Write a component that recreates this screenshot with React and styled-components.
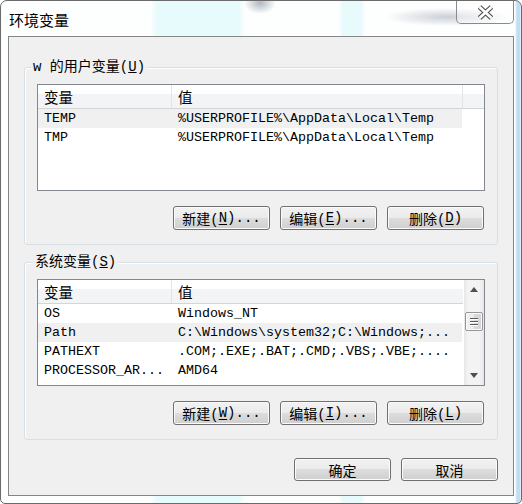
import React from "react";
import styled, { createGlobalStyle } from "styled-components";

const Global = createGlobalStyle`
  html, body {
    margin: 0;
    padding: 0;
    background: #ffffff;
  }
  body {
    font-family: "Noto Sans CJK SC", "Liberation Sans", sans-serif;
  }
`;

const MONO = `"Liberation Mono", "Noto Sans CJK SC", monospace`;

const Window = styled.div`
  width: 522px;
  height: 504px;
  box-sizing: border-box;
  border: 1px solid #6a6a6a;
  border-radius: 7px 7px 5px 5px;
  padding: 0 7px 7px;
  display: flex;
  flex-direction: column;
  overflow: hidden;
  background:
    radial-gradient(ellipse 16px 11px at 259px 2px, rgba(80, 100, 120, 0.45), transparent),
    radial-gradient(ellipse 62px 9px at 446px 16px, rgba(110, 120, 145, 0.35), transparent),
    linear-gradient(90deg, transparent 514px, rgba(150, 200, 240, 0.6) 516px, rgba(150, 200, 240, 0.6) 519px, transparent 520px),
    linear-gradient(90deg, transparent 150px, rgba(205, 246, 250, 0.45) 156px, rgba(205, 246, 250, 0.45) 238px, transparent 244px,
      transparent 338px, rgba(205, 246, 250, 0.45) 342px, rgba(205, 246, 250, 0.45) 360px, transparent 364px),
    #fdfefe;
`;

const TitleBar = styled.div`
  height: 35px;
  flex: 0 0 35px;
  display: flex;
  justify-content: space-between;
  align-items: flex-start;
`;

const Title = styled.div`
  padding: 10px 0 0 1px;
  font-size: 15px;
  line-height: 18px;
  color: #000;
`;

const CloseButton = styled.div`
  width: 58px;
  height: 24px;
  margin-top: -1px;
  box-sizing: border-box;
  border: 1px solid #8a8a8a;
  border-top: none;
  border-radius: 0 0 5px 5px;
  background: rgba(255, 255, 255, 0.35);
  display: flex;
  justify-content: center;
  align-items: center;
  padding-top: 2px;
`;

const Client = styled.div`
  flex: 1 1 auto;
  box-sizing: border-box;
  border: 1px solid #858585;
  background: #f0f0f0;
  padding: 30px 15px 0;
  display: flex;
  flex-direction: column;
`;

const Group = styled.div`
  position: relative;
  border: 1px solid #d5dfe5;
  border-radius: 3px;
  padding: 16px 12px 14px;
  margin-top: ${(p) => p.$gap || 0}px;
  display: flex;
  flex-direction: column;
  box-shadow: inset 1px 1px 0 #ffffff;
`;

const GroupLabel = styled.div`
  position: absolute;
  top: -9px;
  left: ${(p) => p.$left}px;
  padding: 0 2px;
  background: #f0f0f0;
  font-family: ${MONO};
  font-size: 14px;
  line-height: 17px;
  color: #000;
`;

const ListView = styled.div`
  height: 107px;
  box-sizing: border-box;
  border: 1px solid #828790;
  background: #fff;
  display: flex;
  overflow: hidden;
`;

const ListBody = styled.div`
  flex: 1 1 auto;
  display: flex;
  flex-direction: column;
`;

const HeaderRow = styled.div`
  display: flex;
  height: 23px;
  border-bottom: 1px solid #d5d5d5;
  background: linear-gradient(#ffffff 0%, #ffffff 40%, #f3f4f6 41%, #f3f4f6 100%);
`;

const HeaderCell = styled.div`
  width: ${(p) => p.$w}px;
  flex: ${(p) => (p.$w ? "0 0 auto" : "1 1 auto")};
  box-sizing: border-box;
  border-right: ${(p) => (p.$last ? "none" : "1px solid #e3e4e6")};
  padding-left: 6px;
  font-size: 14.5px;
  line-height: 23px;
  color: #000;
`;

const Row = styled.div`
  display: flex;
  height: 19px;
  width: 424px;
  background: ${(p) => (p.$hl ? "#f0f0f0" : "transparent")};
`;

const Cell = styled.div`
  width: ${(p) => p.$w}px;
  box-sizing: border-box;
  padding-left: 6px;
  font-family: ${MONO};
  font-size: 13.33px;
  line-height: 19px;
  color: #000;
  white-space: nowrap;
  overflow: hidden;
`;

const ScrollBar = styled.div`
  flex: 0 0 20px;
  margin-left: 1px;
  display: flex;
  flex-direction: column;
  align-items: center;
  background: linear-gradient(90deg, #e6e6e6, #f3f3f3 20%, #f3f3f3 80%, #e6e6e6);
`;

const Arrow = styled.div`
  height: 19px;
  display: flex;
  justify-content: center;
  align-items: center;
`;

const Thumb = styled.div`
  width: 18px;
  height: 19px;
  margin-top: ${(p) => p.$top}px;
  box-sizing: border-box;
  border: 1px solid #979797;
  border-radius: 2px;
  background: linear-gradient(90deg, #f3f3f3, #e8e8e8 50%, #dadada 51%, #d4d4d4);
  box-shadow: inset 0 0 0 1px #fafafa;
  display: flex;
  flex-direction: column;
  justify-content: center;
  align-items: center;
  gap: 2px;
  span {
    display: block;
    width: 8px;
    height: 1px;
    background: #5a5a5a;
    box-shadow: 0 1px 0 #ffffff;
  }
`;

const Spacer = styled.div`
  flex: 1 1 auto;
`;

const ButtonRow = styled.div`
  display: flex;
  justify-content: flex-end;
  gap: 10px;
  margin-top: ${(p) => p.$top}px;
  padding-right: ${(p) => p.$right || 0}px;
`;

const Button = styled.div`
  width: 97px;
  height: ${(p) => p.$h || 24}px;
  box-sizing: border-box;
  border: 1px solid #707070;
  border-radius: 3px;
  background: linear-gradient(#f2f2f2 0%, #ebebeb 48%, #dddddd 50%, #cfcfcf 100%);
  box-shadow: inset 0 0 0 1px #fbfbfb;
  display: flex;
  justify-content: center;
  align-items: center;
  font-family: ${MONO};
  font-size: 14px;
  color: #000;
  white-space: nowrap;
  u {
    text-decoration: underline;
    text-underline-offset: 2px;
  }
`;

const userVars = [
  ["TEMP", "%USERPROFILE%\\AppData\\Local\\Temp"],
  ["TMP", "%USERPROFILE%\\AppData\\Local\\Temp"],
];

const sysVars = [
  ["OS", "Windows_NT"],
  ["Path", "C:\\Windows\\system32;C:\\Windows;..."],
  ["PATHEXT", ".COM;.EXE;.BAT;.CMD;.VBS;.VBE;...."],
  ["PROCESSOR_AR...", "AMD64"],
];

function Rows({ data, hl }) {
  return data.map(([name, value], i) => (
    <Row key={name} $hl={i === hl}>
      <Cell $w={134}>{name}</Cell>
      <Cell $w={290}>{value}</Cell>
    </Row>
  ));
}

function Header({ scroll }) {
  return (
    <HeaderRow>
      <HeaderCell $w={134}>变量</HeaderCell>
      <HeaderCell $w={291} $last={scroll}>
        值
      </HeaderCell>
      {!scroll && <HeaderCell $last />}
    </HeaderRow>
  );
}

const CloseIcon = () => (
  <svg width="17" height="15" viewBox="0 0 17 15">
    <path d="M2.5 2 L14.5 13 M14.5 2 L2.5 13" stroke="#4b4b4b" strokeWidth="5" />
    <path d="M2.5 2 L14.5 13 M14.5 2 L2.5 13" stroke="#ffffff" strokeWidth="2.8" />
  </svg>
);

const UpArrow = () => (
  <svg width="8" height="5" viewBox="0 0 8 5">
    <polygon points="0,5 4,0 8,5" fill="#505050" />
  </svg>
);

const DownArrow = () => (
  <svg width="8" height="5" viewBox="0 0 8 5">
    <polygon points="0,0 8,0 4,5" fill="#505050" />
  </svg>
);

export default function App() {
  return (
    <>
      <Global />
      <Window>
        <TitleBar>
          <Title>环境变量</Title>
          <CloseButton>
            <CloseIcon />
          </CloseButton>
        </TitleBar>
        <Client>
          <Group>
            <GroupLabel $left={6}>
              w 的用户变量(<u>U</u>)
            </GroupLabel>
            <ListView>
              <ListBody>
                <Header />
                <Rows data={userVars} hl={0} />
              </ListBody>
            </ListView>
            <ButtonRow $top={15} $right={1}>
              <Button>
                新建(<u>N</u>)...
              </Button>
              <Button>
                编辑(<u>E</u>)...
              </Button>
              <Button>
                删除(<u>D</u>)
              </Button>
            </ButtonRow>
          </Group>

          <Group $gap={17}>
            <GroupLabel $left={8}>
              系统变量(<u>S</u>)
            </GroupLabel>
            <ListView>
              <ListBody>
                <Header scroll />
                <Rows data={sysVars} hl={1} />
              </ListBody>
              <ScrollBar>
                <Arrow>
                  <UpArrow />
                </Arrow>
                <Thumb $top={13}>
                  <span />
                  <span />
                  <span />
                </Thumb>
                <Spacer />
                <Arrow>
                  <DownArrow />
                </Arrow>
              </ScrollBar>
            </ListView>
            <ButtonRow $top={15} $right={1}>
              <Button>
                新建(<u>W</u>)...
              </Button>
              <Button>
                编辑(<u>I</u>)...
              </Button>
              <Button>
                删除(<u>L</u>)
              </Button>
            </ButtonRow>
          </Group>

          <ButtonRow $top={18}>
            <Button $h={23}>确定</Button>
            <Button $h={23}>取消</Button>
          </ButtonRow>
        </Client>
      </Window>
    </>
  );
}
